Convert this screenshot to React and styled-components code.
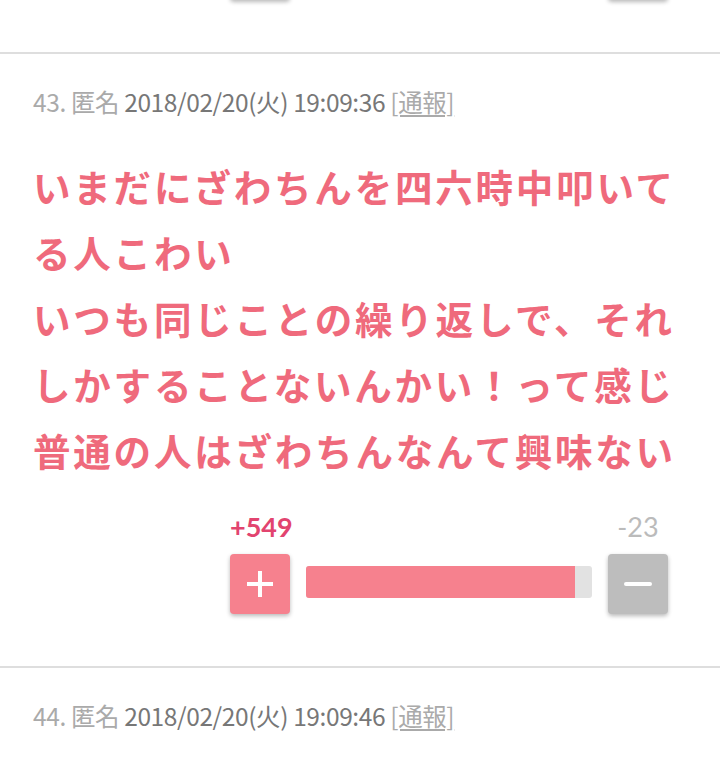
import React from "react";
import styled, { createGlobalStyle } from "styled-components";

const GlobalStyle = createGlobalStyle`
  html, body {
    margin: 0;
    padding: 0;
    background: #fff;
    overflow: hidden;
  }
  body {
    font-family: "Noto Sans CJK JP", "Noto Sans", sans-serif;
  }
`;

const Feed = styled.div`
  width: 720px;
  margin-top: -60px;
`;

const Comment = styled.article`
  padding: ${(p) => (p.$tail ? "0" : "33px")} 33px 52px;
  border-bottom: 2px solid #dedede;
`;

const Header = styled.div`
  font-size: 24.5px;
  line-height: 30px;
  color: #aaa;
  font-weight: 400;
  letter-spacing: -0.4px;
`;

const Date = styled.span`
  color: #777;
`;

const Report = styled.span`
  color: #aaa;
  text-decoration: underline;
  text-underline-offset: 3px;
`;

const Body = styled.div`
  margin-top: 36px;
  font-size: 37.5px;
  line-height: 66px;
  font-weight: 700;
  color: #ef6a7c;
  letter-spacing: 2.8px;
`;

const VoteBlock = styled.div`
  width: 438px;
  margin: 29px 0 0 197px;
  display: grid;
  grid-template-columns: 60px 1fr 60px;
  column-gap: 16px;
  row-gap: 12px;
  align-items: center;
`;

const Count = styled.div`
  font-family: Lato, "Noto Sans", sans-serif;
  font-size: 27px;
  line-height: 30px;
  text-align: center;
  font-weight: ${(p) => (p.$plus ? 700 : 400)};
  color: ${(p) => (p.$plus ? "#e2446f" : "#bbbbbb")};
  grid-column: ${(p) => (p.$plus ? 1 : 3)};
`;

const VoteButton = styled.button`
  width: 60px;
  height: 60px;
  border: none;
  border-radius: 4px;
  padding: 0;
  display: flex;
  align-items: center;
  justify-content: center;
  background: ${(p) => (p.$plus ? "#f6818e" : "#bdbdbd")};
  box-shadow: 0 2px 4px rgba(0, 0, 0, 0.28);
`;

const Bar = styled.div`
  height: 32px;
  border-radius: 3px;
  background: #e2e2e2;
  overflow: hidden;
  margin-top: -4px;
`;

const Fill = styled.div`
  height: 100%;
  background: #f6818e;
`;

const PlusIcon = () => (
  <svg width="28" height="28" viewBox="0 0 28 28">
    <path d="M14 1v26M1 14h26" stroke="#fff" strokeWidth="4" />
  </svg>
);

const MinusIcon = () => (
  <svg width="28" height="28" viewBox="0 0 28 28">
    <path d="M2 14h24" stroke="#fff" strokeWidth="4" strokeLinecap="round" />
  </svg>
);

function Votes({ plus, minus, showCounts = true }) {
  const pct = (plus / (plus + minus)) * 100 - 2;
  return (
    <VoteBlock style={showCounts ? undefined : { marginTop: 0 }}>
      {showCounts && <Count $plus>+{plus}</Count>}
      {showCounts && <Count>-{minus}</Count>}
      <VoteButton $plus aria-label="plus">
        <PlusIcon />
      </VoteButton>
      <Bar>
        <Fill style={{ width: `${pct}%` }} />
      </Bar>
      <VoteButton aria-label="minus">
        <MinusIcon />
      </VoteButton>
    </VoteBlock>
  );
}

function CommentHeader({ no, date }) {
  return (
    <Header>
      {no}. 匿名 <Date>{date}</Date> <Report>[通報]</Report>
    </Header>
  );
}

export default function App() {
  return (
    <>
      <GlobalStyle />
      <Feed>
        <Comment $tail>
          <Votes plus={120} minus={10} showCounts={false} />
        </Comment>
        <Comment>
          <CommentHeader no={43} date="2018/02/20(火) 19:09:36" />
          <Body>
            いまだにざわちんを四六時中叩いてる人こわい
            <br />
            いつも同じことの繰り返しで、それしかすることないんかい！って感じ
            <br />
            普通の人はざわちんなんて興味ない
          </Body>
          <Votes plus={549} minus={23} />
        </Comment>
        <Comment>
          <CommentHeader no={44} date="2018/02/20(火) 19:09:46" />
        </Comment>
      </Feed>
    </>
  );
}
